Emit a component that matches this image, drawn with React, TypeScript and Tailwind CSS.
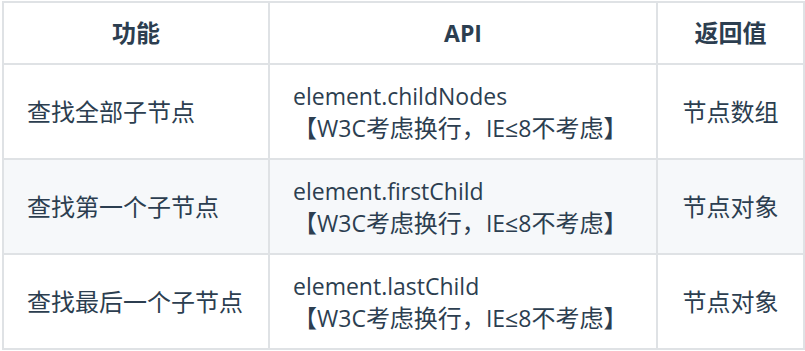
import React from 'react';

const rows = [
  { fn: '查找全部子节点', api: 'element.childNodes', ret: '节点数组' },
  { fn: '查找第一个子节点', api: 'element.firstChild', ret: '节点对象' },
  { fn: '查找最后一个子节点', api: 'element.lastChild', ret: '节点对象' },
];

const cell = 'border-2 border-[#dfe2e5] align-middle';

// CJK glyphs in the shot run a touch larger than the latin text
const Mixed = ({ text }: { text: string }) => {
  const parts = text.match(/[\u3000-\u9fff\uff00-\uffef]+|[^\u3000-\u9fff\uff00-\uffef]+/g) || [];
  return (
    <>
      {parts.map((p, i) =>
        /[\u3000-\u9fff\uff00-\uffef]/.test(p) ? (
          <span key={i} className="text-[24px]">{p}</span>
        ) : (
          <span key={i}>{p}</span>
        )
      )}
    </>
  );
};

export default function App() {
  return (
    <div
      className="bg-white pl-[2px] pt-[1px] text-[#2c3e50] text-[23px] leading-[32px]"
      style={{ fontFamily: '"Open Sans", "Noto Sans CJK SC", sans-serif' }}
    >
      <table className="w-[801px] border-collapse table-fixed">
        <colgroup>
          <col className="w-[266px]" />
          <col className="w-[388px]" />
          <col className="w-[147px]" />
        </colgroup>
        <thead>
          <tr className="h-[62px]">
            <th className={`${cell} font-bold text-center`}><Mixed text="功能" /></th>
            <th className={`${cell} font-bold text-center`}>API</th>
            <th className={`${cell} font-bold text-center`}><Mixed text="返回值" /></th>
          </tr>
        </thead>
        <tbody>
          {rows.map((r, i) => (
            <tr key={i} className={`h-[95px] ${i % 2 === 1 ? 'bg-[#f6f8fa]' : 'bg-white'}`}>
              <td className={`${cell} pl-[23px]`}><Mixed text={r.fn} /></td>
              <td className={`${cell} pl-[23px]`}>
                <div>{r.api}</div>
                <div><Mixed text="【W3C考虑换行，IE≤8不考虑】" /></div>
              </td>
              <td className={`${cell} text-center`}><Mixed text={r.ret} /></td>
            </tr>
          ))}
        </tbody>
      </table>
    </div>
  );
}
